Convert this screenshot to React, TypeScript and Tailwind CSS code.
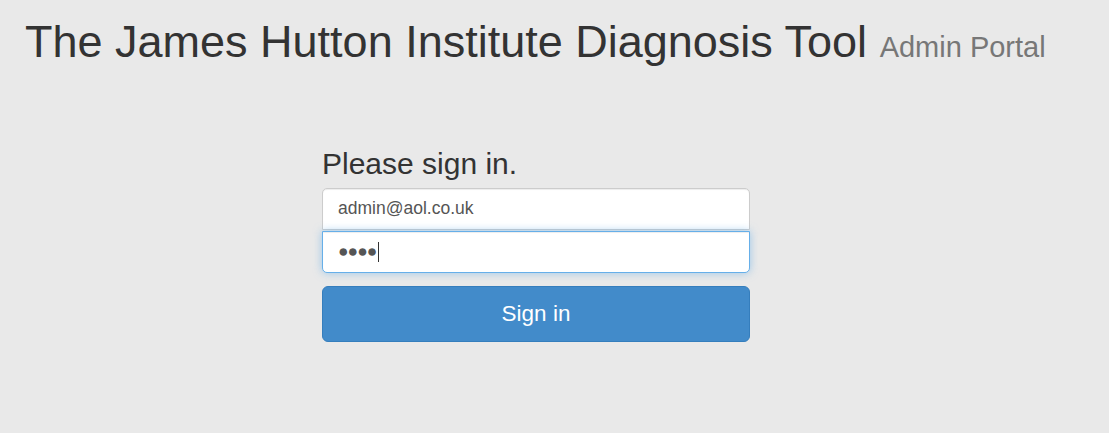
export default function App() {
  return (
    <div className="min-h-[433px] w-full bg-[#e9e9e9] font-['Liberation_Sans',Arial,sans-serif] text-[#333]">
      <div className="px-[25px] pt-[17px]">
        <h1 className="text-[45px] leading-[1.1] font-normal">
          The James Hutton Institute Diagnosis Tool{" "}
          <small className="text-[29px] text-[#777]">Admin Portal</small>
        </h1>
      </div>

      <form className="ml-[322px] mt-[80px] w-[428px]" onSubmit={(e) => e.preventDefault()}>
        <h3 className="mb-[8px] text-[30px] leading-[1.1]">Please sign in.</h3>
        <input
          type="text"
          defaultValue="admin@aol.co.uk"
          className="block h-[42px] w-full rounded-t-[5px] border border-[#ccc] bg-white px-[15px] text-[17.5px] text-[#555] shadow-[inset_0_1px_1px_rgba(0,0,0,0.075)] outline-none"
        />
        <div className="mt-[1px] flex h-[42px] w-full items-center rounded-b-[5px] border border-[#66afe9] bg-white px-[15px] text-[17.5px] text-[#555] shadow-[inset_0_1px_1px_rgba(0,0,0,0.075),0_0_8px_rgba(102,175,233,0.6)]">
          <span className="tracking-[-1px]">●●●●</span>
          <span className="ml-[2px] h-[20px] w-px bg-[#333]" />
        </div>
        <button
          type="submit"
          className="mt-[13px] h-[56px] w-full rounded-[6px] border border-[#357ebd] bg-[#428bca] text-[22.5px] text-white"
        >
          Sign in
        </button>
      </form>
    </div>
  );
}
